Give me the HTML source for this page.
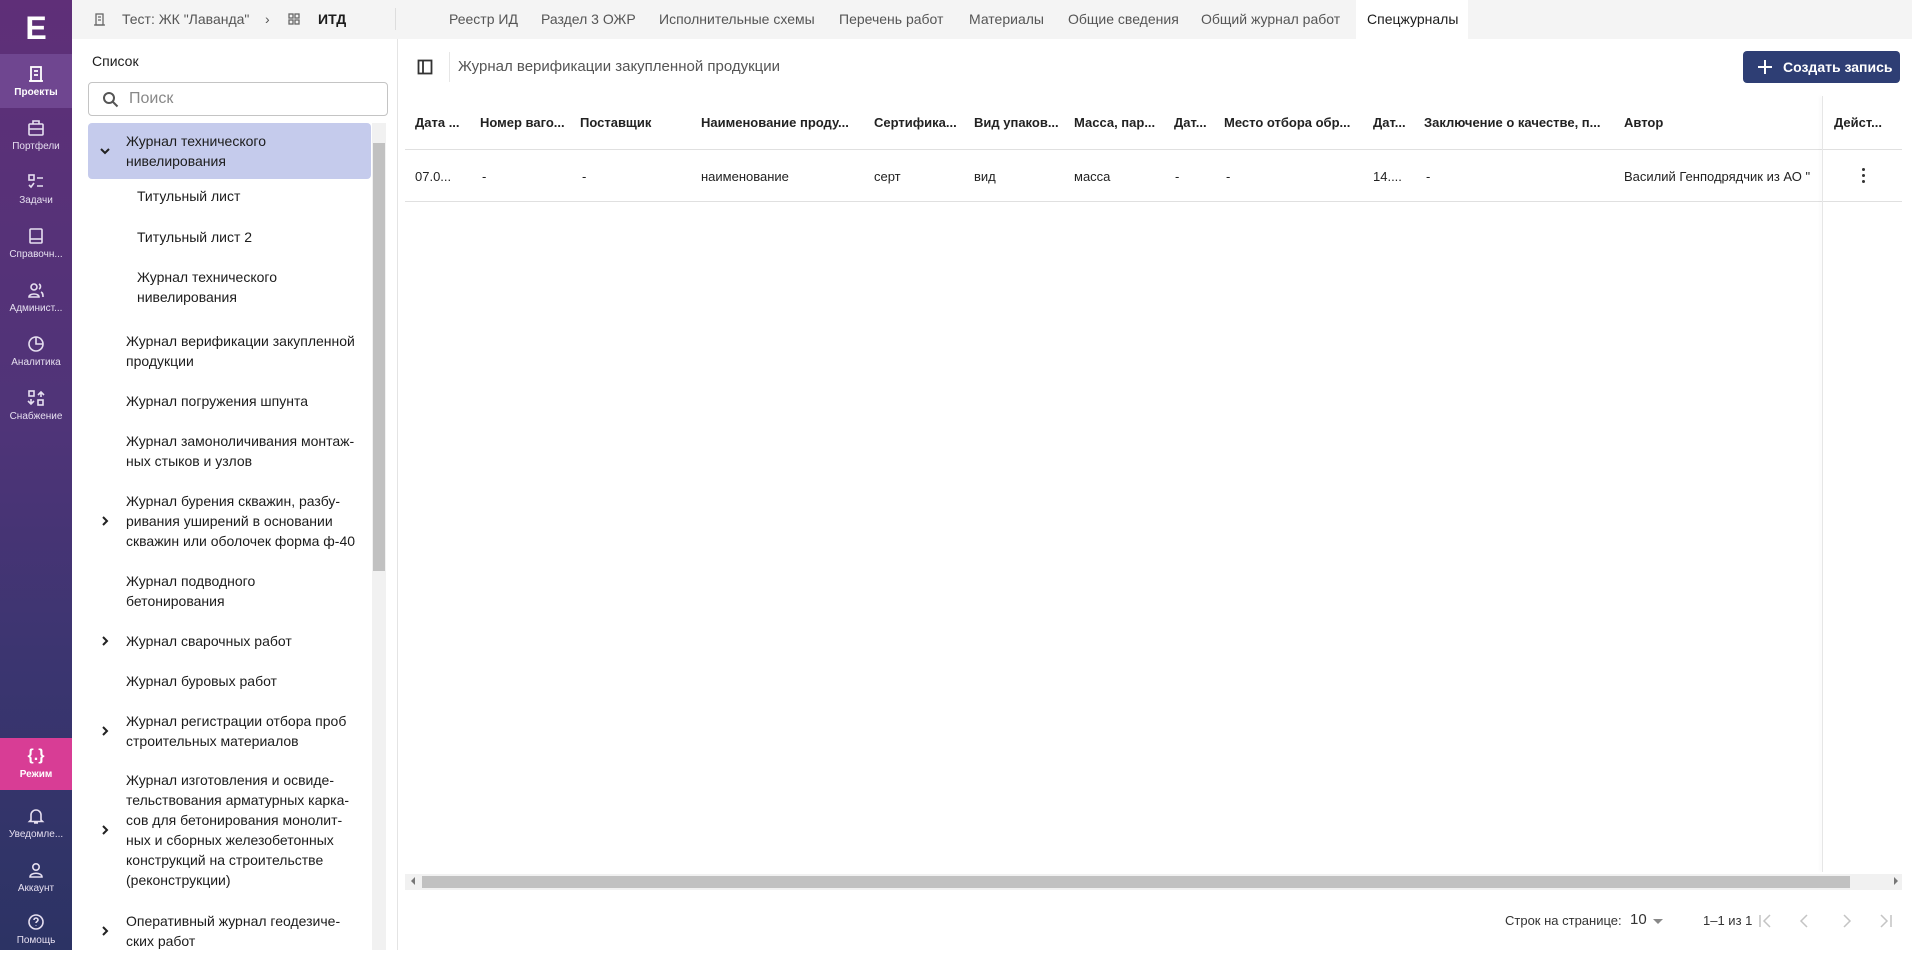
<!DOCTYPE html>
<html><head><meta charset="utf-8"><style>
*{box-sizing:border-box;margin:0;padding:0}
body{width:1912px;height:950px;overflow:hidden;font-family:"Liberation Sans","Noto Sans CJK SC",sans-serif;color:#1c1c1c;background:#fff;position:relative}
.side{position:absolute;left:0;top:0;width:72px;height:950px;background:linear-gradient(#5f2f78 0%,#4f3478 45%,#3b3570 70%,#2c3364 100%)}
.logo{position:absolute;left:0;top:0;width:72px;height:54px;color:#fff;font-weight:bold;font-size:32px;text-align:center;line-height:56px}
.nav{position:absolute;left:0;width:72px;height:54px;text-align:center;color:#e6dff0;font-size:10px}
.nav svg{display:block;margin:11px auto 4px}
.nav.act{background:#6f4690;color:#fff;font-weight:bold}
.nav.mode{background:#d83d95;color:#fff;font-weight:bold;height:52px}
.top{position:absolute;left:72px;top:0;width:1840px;height:39px;background:#f4f4f4}
.crumb{position:absolute;top:11px;font-size:14px;color:#555}
.tab{position:absolute;top:0;height:39px;line-height:39px;font-size:14px;color:#555;padding:0 11px}
.tab.act{background:#fff;color:#1c1c1c}
.lp{position:absolute;left:72px;top:39px;width:326px;height:911px;border-right:1px solid #e4e4e4}
.search{position:absolute;left:16px;top:43px;width:300px;height:34px;border:1px solid #c4c4c4;border-radius:4px;font-size:16px;color:#888;padding:7px 0 0 40px}
.it{position:absolute;left:54px;font-size:14px;line-height:20px;color:#1c1c1c;width:240px}
.ch{position:absolute;left:27px}
.sb{position:absolute;left:300px;top:84px;width:14px;height:827px;background:#f1f1f1}
.th{position:absolute;top:115px;font-size:13px;font-weight:bold;color:#222;white-space:nowrap}
.td{position:absolute;top:169px;font-size:13px;color:#222;white-space:nowrap}
</style></head><body>
<div class="side">
 <div class="logo">E</div>
 <div class="nav act" style="top:54px"><svg width="18" height="18" viewBox="0 0 18 18" fill="none" stroke="#fff" stroke-width="1.8"><rect x="4" y="2" width="10" height="14"/><path d="M2 16h14M7 6h4M7 10h4"/></svg>Проекты</div>
 <div class="nav" style="top:108px"><svg width="18" height="18" viewBox="0 0 18 18" fill="none" stroke="#e6dff0" stroke-width="1.6"><rect x="2" y="5" width="14" height="11" rx="1"/><path d="M6 5V2h6v3M2 10h14"/></svg>Портфели</div>
 <div class="nav" style="top:162px"><svg width="18" height="18" viewBox="0 0 18 18" fill="none" stroke="#e6dff0" stroke-width="1.6"><rect x="2" y="2" width="5" height="5"/><path d="M10 5h6M10 13h6M2 12l2 2 3-4"/></svg>Задачи</div>
 <div class="nav" style="top:216px"><svg width="18" height="18" viewBox="0 0 18 18" fill="none" stroke="#e6dff0" stroke-width="1.6"><rect x="3" y="2" width="12" height="14" rx="1"/><path d="M3 12h12"/></svg>Справочн...</div>
 <div class="nav" style="top:270px"><svg width="18" height="18" viewBox="0 0 18 18" fill="none" stroke="#e6dff0" stroke-width="1.6"><circle cx="7" cy="6" r="3"/><path d="M2 16c0-4 10-4 10 0zM12 3c2 1 2 4 0 5M14 11c2 1 2 3 2 5"/></svg>Админист...</div>
 <div class="nav" style="top:324px"><svg width="18" height="18" viewBox="0 0 18 18" fill="none" stroke="#e6dff0" stroke-width="1.6"><circle cx="9" cy="9" r="7"/><path d="M9 2v7h7"/></svg>Аналитика</div>
 <div class="nav" style="top:378px"><svg width="18" height="18" viewBox="0 0 18 18" fill="none" stroke="#e6dff0" stroke-width="1.6"><rect x="2" y="2" width="5" height="5"/><rect x="11" y="11" width="5" height="5"/><path d="M11 6l3-3 3 3M14 3v5M7 12l-3 3-3-3M4 15v-5"/></svg>Снабжение</div>
 <div class="nav mode" style="top:738px"><div style="font-size:16px;margin:9px 0 4px">{.}</div>Режим</div>
 <div class="nav" style="top:796px"><svg width="18" height="18" viewBox="0 0 18 18" fill="none" stroke="#e6dff0" stroke-width="1.6"><path d="M4 13V8a5 5 0 0110 0v5l1.5 1.5h-13zM7 16h4"/></svg>Уведомле...</div>
 <div class="nav" style="top:850px"><svg width="18" height="18" viewBox="0 0 18 18" fill="none" stroke="#e6dff0" stroke-width="1.6"><circle cx="9" cy="6" r="3.2"/><path d="M3 16c0-5 12-5 12 0z"/></svg>Аккаунт</div>
 <div class="nav" style="top:902px"><svg width="18" height="18" viewBox="0 0 18 18" fill="none" stroke="#e6dff0" stroke-width="1.6"><circle cx="9" cy="9" r="7"/><path d="M7 7a2 2 0 114 0c0 1.5-2 1.5-2 3M9 12.5v.5"/></svg>Помощь</div>
</div>
<div class="top">
 <svg style="position:absolute;left:21px;top:13px" width="13" height="13" viewBox="0 0 13 13" fill="none" stroke="#666" stroke-width="1.3"><rect x="3" y="1" width="7" height="11"/><path d="M1 12h11M5 4h3M5 7h3"/></svg>
 <div class="crumb" style="left:50px">Тест: ЖК "Лаванда"</div>
 <div class="crumb" style="left:193px">›</div>
 <svg style="position:absolute;left:216px;top:13px" width="12" height="12" viewBox="0 0 12 12" fill="none" stroke="#666" stroke-width="1.3"><rect x="1" y="1" width="4" height="4"/><rect x="7" y="1" width="4" height="4"/><rect x="1" y="7" width="4" height="4"/><rect x="7" y="7" width="4" height="4"/></svg>
 <div class="crumb" style="left:246px;font-weight:bold;color:#1c1c1c">ИТД</div>
 <div style="position:absolute;left:323px;top:8px;width:1px;height:22px;background:#ddd"></div>
 <div class="tab" style="left:366px">Реестр ИД</div>
 <div class="tab" style="left:458px">Раздел 3 ОЖР</div>
 <div class="tab" style="left:576px">Исполнительные схемы</div>
 <div class="tab" style="left:756px">Перечень работ</div>
 <div class="tab" style="left:886px">Материалы</div>
 <div class="tab" style="left:985px">Общие сведения</div>
 <div class="tab" style="left:1118px">Общий журнал работ</div>
 <div class="tab act" style="left:1284px;width:112px">Спецжурналы</div>
</div>
<div class="lp">
 <div style="position:absolute;left:20px;top:14px;font-size:14px">Список</div>
 <div class="search">Поиск</div>
 <svg style="position:absolute;left:30px;top:52px" width="17" height="17" viewBox="0 0 17 17" fill="none" stroke="#555" stroke-width="2"><circle cx="7" cy="7" r="5"/><path d="M11 11l4.5 4.5"/></svg>
 <div style="position:absolute;left:16px;top:84px;width:283px;height:56px;background:#c5cbec;border-radius:4px"></div>
 <svg class="ch" style="top:106px" width="12" height="12" viewBox="0 0 12 12" fill="none" stroke="#222" stroke-width="2"><path d="M2 4l4 4 4-4"/></svg>
 <div class="it" style="top:92px">Журнал технического нивелирования</div>
 <div class="it" style="left:65px;top:147px">Титульный лист</div>
 <div class="it" style="left:65px;top:188px">Титульный лист 2</div>
 <div class="it" style="left:65px;top:228px;width:180px">Журнал технического нивелирования</div>
 <div class="it" style="top:292px">Журнал верификации закупленной продукции</div>
 <div class="it" style="top:352px">Журнал погружения шпунта</div>
 <div class="it" style="top:392px">Журнал замоноличивания монтаж-ных стыков и узлов</div>
 <svg class="ch" style="top:476px" width="12" height="12" viewBox="0 0 12 12" fill="none" stroke="#222" stroke-width="2"><path d="M4 2l4 4-4 4"/></svg>
 <div class="it" style="top:452px">Журнал бурения скважин, разбу-ривания уширений в основании скважин или оболочек форма ф-40</div>
 <div class="it" style="top:532px;width:150px">Журнал подводного бетонирования</div>
 <svg class="ch" style="top:596px" width="12" height="12" viewBox="0 0 12 12" fill="none" stroke="#222" stroke-width="2"><path d="M4 2l4 4-4 4"/></svg>
 <div class="it" style="top:592px">Журнал сварочных работ</div>
 <div class="it" style="top:632px">Журнал буровых работ</div>
 <svg class="ch" style="top:686px" width="12" height="12" viewBox="0 0 12 12" fill="none" stroke="#222" stroke-width="2"><path d="M4 2l4 4-4 4"/></svg>
 <div class="it" style="top:672px">Журнал регистрации отбора проб строительных материалов</div>
 <svg class="ch" style="top:785px" width="12" height="12" viewBox="0 0 12 12" fill="none" stroke="#222" stroke-width="2"><path d="M4 2l4 4-4 4"/></svg>
 <div class="it" style="top:731px;width:235px">Журнал изготовления и освиде-тельствования арматурных карка-сов для бетонирования монолит-ных и сборных железобетонных конструкций на строительстве (реконструкции)</div>
 <svg class="ch" style="top:886px" width="12" height="12" viewBox="0 0 12 12" fill="none" stroke="#222" stroke-width="2"><path d="M4 2l4 4-4 4"/></svg>
 <div class="it" style="top:872px">Оперативный журнал геодезиче-ских работ</div>
 <div class="sb"><div style="position:absolute;left:1px;top:20px;width:12px;height:428px;background:#c1c1c1"></div></div>
</div>
<svg style="position:absolute;left:417px;top:59px" width="16" height="16" viewBox="0 0 16 16" fill="none" stroke="#333" stroke-width="1.8"><rect x="1.5" y="1.5" width="13" height="13"/><path d="M6 1.5v13"/></svg>
<div style="position:absolute;left:449px;top:52px;width:1px;height:30px;background:#e6e6e6"></div>
<div style="position:absolute;left:458px;top:58px;font-size:15px;color:#555">Журнал верификации закупленной продукции</div>
<div style="position:absolute;left:1743px;top:51px;width:157px;height:32px;background:#2e3e74;border-radius:4px;color:#fff;font-size:14px;font-weight:bold;line-height:32px;padding-left:40px">Создать запись</div>
<svg style="position:absolute;left:1757px;top:59px" width="16" height="16" viewBox="0 0 16 16" stroke="#fff" stroke-width="2"><path d="M8 1v14M1 8h14"/></svg>
<div style="position:absolute;left:405px;top:149px;width:1497px;height:1px;background:#e0e0e0"></div>
<div style="position:absolute;left:405px;top:201px;width:1497px;height:1px;background:#e0e0e0"></div>
<div style="position:absolute;left:1822px;top:96px;width:1px;height:776px;background:#e6e6e6;box-shadow:-2px 0 3px rgba(0,0,0,.06)"></div>
<div class="th" style="left:415px">Дата ...</div>
<div class="th" style="left:480px">Номер ваго...</div>
<div class="th" style="left:580px">Поставщик</div>
<div class="th" style="left:701px">Наименование проду...</div>
<div class="th" style="left:874px">Сертифика...</div>
<div class="th" style="left:974px">Вид упаков...</div>
<div class="th" style="left:1074px">Масса, пар...</div>
<div class="th" style="left:1174px">Дат...</div>
<div class="th" style="left:1224px">Место отбора обр...</div>
<div class="th" style="left:1373px">Дат...</div>
<div class="th" style="left:1424px">Заключение о качестве, п...</div>
<div class="th" style="left:1624px">Автор</div>
<div class="th" style="left:1834px">Дейст...</div>
<div class="td" style="left:415px">07.0...</div>
<div class="td" style="left:482px">-</div>
<div class="td" style="left:582px">-</div>
<div class="td" style="left:701px">наименование</div>
<div class="td" style="left:874px">серт</div>
<div class="td" style="left:974px">вид</div>
<div class="td" style="left:1074px">масса</div>
<div class="td" style="left:1175px">-</div>
<div class="td" style="left:1226px">-</div>
<div class="td" style="left:1373px">14....</div>
<div class="td" style="left:1426px">-</div>
<div class="td" style="left:1624px;width:197px;overflow:hidden">Василий Генподрядчик из АО "</div>
<div style="position:absolute;left:1862px;top:168px;width:3px">
 <div style="width:3px;height:3px;background:#333;border-radius:50%;margin-bottom:3px"></div>
 <div style="width:3px;height:3px;background:#333;border-radius:50%;margin-bottom:3px"></div>
 <div style="width:3px;height:3px;background:#333;border-radius:50%"></div>
</div>
<div style="position:absolute;left:405px;top:874px;width:1497px;height:16px;background:#f1f1f1"></div>
<div style="position:absolute;left:422px;top:876px;width:1428px;height:12px;background:#c1c1c1"></div>
<div style="position:absolute;left:411px;top:877px;width:0;height:0;border-top:4px solid transparent;border-bottom:4px solid transparent;border-right:4px solid #777"></div>
<div style="position:absolute;left:1894px;top:877px;width:0;height:0;border-top:4px solid transparent;border-bottom:4px solid transparent;border-left:4px solid #777"></div>
<div style="position:absolute;left:1505px;top:913px;font-size:13px;color:#333">Строк на странице:</div>
<div style="position:absolute;left:1630px;top:911px;font-size:15px;color:#333">10</div>
<div style="position:absolute;left:1653px;top:919px;width:0;height:0;border-left:5px solid transparent;border-right:5px solid transparent;border-top:5px solid #888"></div>
<div style="position:absolute;left:1703px;top:913px;font-size:13px;color:#333">1–1 из 1</div>
<svg style="position:absolute;left:1758px;top:913px" width="140" height="16" viewBox="0 0 140 16" fill="none" stroke="#c4c4c4" stroke-width="1.5"><path d="M2 2v12M12 2l-6 6 6 6M49 2l-6 6 6 6M86 2l6 6-6 6M123 2l6 6-6 6M133 2v12"/></svg>
</body></html>
